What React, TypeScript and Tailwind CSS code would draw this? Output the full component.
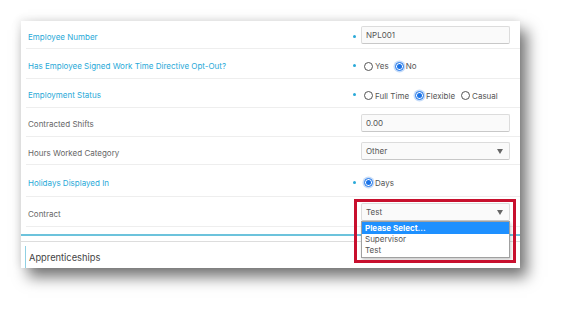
const labelFont = { fontFamily: "Inter, 'Liberation Sans', sans-serif" };

type Row = {
  label: string;
  required?: boolean;
  h: string;
  field: React.ReactNode;
};

function Radio({ checked, label }: { checked?: boolean; label: string }) {
  return (
    <span className="flex items-center gap-[2px]">
      {checked ? (
        <span className="flex h-[9px] w-[9px] items-center justify-center rounded-full border border-[#1a73e8] bg-white shadow-[0_0_0_1.5px_rgba(26,115,232,0.25)]">
          <span className="h-[5px] w-[5px] rounded-full bg-[#1a73e8]" />
        </span>
      ) : (
        <span className="h-[9px] w-[9px] rounded-full border border-[#555] bg-white" />
      )}
      <span className="text-[8px] text-[#555]">{label}</span>
    </span>
  );
}

function TextBox({ value }: { value: string }) {
  return (
    <div className="flex h-[18px] w-[149px] items-center rounded-[2px] border border-[#dcdcdc] border-b-[#c8c8c8] bg-[#fafafa] px-[4px] text-[8px] text-[#555]">
      {value}
    </div>
  );
}

function SelectBox({ value }: { value: string }) {
  return (
    <div className="flex h-[18px] w-[149px] items-center justify-between rounded-[2px] border border-[#dcdcdc] border-b-[#c8c8c8] bg-[#fafafa] pl-[4px] pr-[6px] text-[8px] text-[#555]">
      <span>{value}</span>
      <span className="h-0 w-0 border-x-[3.5px] border-t-[5px] border-x-transparent border-t-[#666]" />
    </div>
  );
}

const rows: Row[] = [
  { label: "Employee Number", required: true, h: "h-[28px]", field: <TextBox value="NPL001" /> },
  {
    label: "Has Employee Signed Work Time Directive Opt-Out?",
    required: true,
    h: "h-[30px]",
    field: (
      <div className="flex items-center gap-[6px] pl-[3px] pt-[4px]">
        <Radio label="Yes" />
        <Radio checked label="No" />
      </div>
    ),
  },
  {
    label: "Employment Status",
    required: true,
    h: "h-[29px]",
    field: (
      <div className="flex items-center gap-[6px] pl-[3px] pt-[4px]">
        <Radio label="Full Time" />
        <Radio checked label="Flexible" />
        <Radio label="Casual" />
      </div>
    ),
  },
  { label: "Contracted Shifts", h: "h-[29px]", field: <TextBox value="0.00" /> },
  { label: "Hours Worked Category", h: "h-[28px]", field: <SelectBox value="Other" /> },
  {
    label: "Holidays Displayed In",
    required: true,
    h: "h-[32px]",
    field: (
      <div className="flex items-center pl-[3px] pt-[3px]">
        <Radio checked label="Days" />
      </div>
    ),
  },
  { label: "Contract", h: "h-[30px]", field: <SelectBox value="Test" /> },
];

export default function App() {
  return (
    <div className="relative h-[310px] w-[562px] overflow-hidden bg-white" style={labelFont}>
      <div className="ml-[21px] mt-[21px] flex h-[247px] w-[499px] flex-col overflow-hidden bg-white shadow-[7px_9px_14px_rgba(0,0,0,0.55),-2px_-2px_8px_rgba(0,0,0,0.08)]">
        <div className="pl-[5px]">
          {rows.map((r) => (
            <div key={r.label} className={`flex items-center border-b border-[#eeeeee] ${r.h}`}>
              <div
                className={`w-[325px] pl-[2px] pt-[4px] text-[8px] ${r.required ? "text-[#29a9d8]" : "text-[#666]"}`}
              >
                {r.label}
              </div>
              <div className="flex w-[7px] justify-center pt-[3px]">
                {r.required && <span className="h-[3px] w-[3px] rounded-full bg-[#29a9d8]" />}
              </div>
              <div className="pl-[3px] pt-px">{r.field}</div>
            </div>
          ))}
        </div>
        <div className="mt-[7px] h-[2px] bg-[#6cc3dc]" />
        <div className="mt-[5px] h-px bg-[#dddddd]" />
        <div className="ml-[4px] mt-[4px] flex-1 border-l border-[#8fd0e3] pl-[3px] pt-[5px] text-[9.3px] text-[#444]">
          Apprenticeships
        </div>
      </div>

      {/* open dropdown list */}
      <div className="absolute left-[361px] top-[221px] w-[149px] border border-[#a0a0a0] bg-white text-[8px] leading-[11px] text-[#555] shadow-[1px_2px_3px_rgba(0,0,0,0.2)]">
        <div className="bg-[#1e90ff] px-[3px] py-[0.5px] font-bold text-white">Please Select...</div>
        <div className="px-[3px]">Supervisor</div>
        <div className="px-[3px] pb-px">Test</div>
      </div>

      {/* highlight box */}
      <div className="pointer-events-none absolute left-[354px] top-[199px] h-[64px] w-[162px] border-[3px] border-[#c8102e]" />
    </div>
  );
}
